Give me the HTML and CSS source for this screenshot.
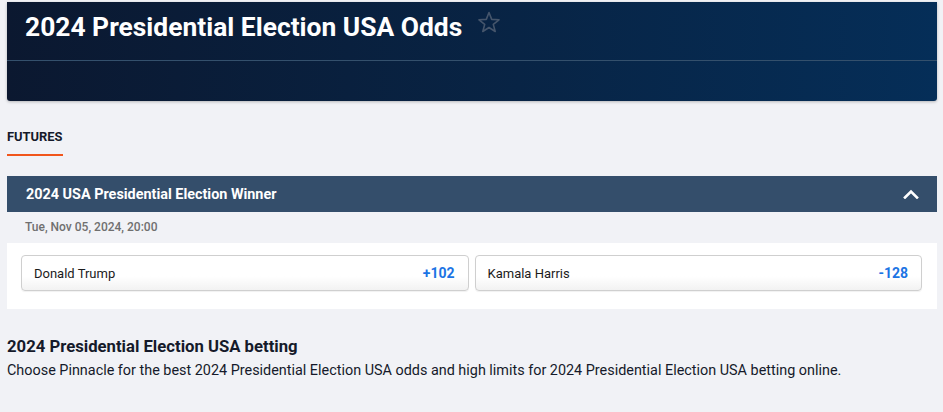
FILE: index.html
```html
<!DOCTYPE html>
<html lang="en">
<head>
<meta charset="utf-8">
<link rel="stylesheet" href="styles.css">
</head>
<body>
<div class="page">
  <header class="hero">
    <div class="hero-top">
      <h1 class="hero-title">2024 Presidential Election USA Odds</h1>
      <svg class="star" width="24" height="24" viewBox="0 0 24 24"><path d="M12 2.5l2.7 6.9 7.3.4-5.7 4.6 1.9 7.1L12 17.5l-6.2 4 1.9-7.1L2 9.8l7.3-.4z" fill="none" stroke="#45556b" stroke-width="1.6" stroke-linejoin="round"/></svg>
    </div>
    <div class="hero-bottom"></div>
  </header>

  <nav class="tabs">
    <span class="tab active">FUTURES</span>
  </nav>

  <section class="market">
    <div class="market-head">
      <span class="market-title">2024 USA Presidential Election Winner</span>
      <svg class="chevron" width="16" height="10" viewBox="0 0 16 10"><path d="M2 8.5L8 2.5l6 6" fill="none" stroke="#fff" stroke-width="2.6" stroke-linecap="square"/></svg>
    </div>
    <div class="market-date">Tue, Nov 05, 2024, 20:00</div>
    <div class="market-body">
      <button class="odd"><span class="odd-name">Donald Trump</span><span class="odd-price">+102</span></button>
      <button class="odd"><span class="odd-name">Kamala Harris</span><span class="odd-price">-128</span></button>
    </div>
  </section>

  <section class="about">
    <h2 class="about-title">2024 Presidential Election USA betting</h2>
    <p class="about-text">Choose Pinnacle for the best 2024 Presidential Election USA odds and high limits for 2024 Presidential Election USA betting online.</p>
  </section>
</div>
</body>
</html>
```

FILE: styles.css
```css
* { box-sizing: border-box; }
html, body { margin: 0; padding: 0; }
body {
  background: #f1f2f6;
  font-family: Roboto, "Liberation Sans", Arial, sans-serif;
  color: #151a2a;
}
.page {
  padding: 2px 6px 0 7px;
}
.hero {
  background: linear-gradient(90deg, #0b1830 0%, #082445 55%, #052e58 100%);
  border-radius: 0 0 3px 3px;
  box-shadow: 0 1px 3px rgba(0,0,0,0.25);
}
.hero-top {
  height: 59px;
  display: flex;
  align-items: flex-start;
  padding: 9px 0 0 18px;
  border-bottom: 1px solid #34506c;
}
.hero-title {
  margin: 0;
  font-size: 26.4px;
  line-height: 32px;
  font-weight: 700;
  color: #fff;
}
.star {
  margin: -1px 0 0 15px;
}
.hero-bottom { height: 40px; }

.tabs {
  padding-top: 28px;
  display: flex;
}
.tab {
  font-size: 12.9px;
  font-weight: 700;
  color: #151a2a;
  padding-bottom: 10px;
  border-bottom: 2px solid #f1561c;
  line-height: 15px;
}
.market { margin-top: 20px; }
.market-head {
  height: 36px;
  background: #344e6b;
  display: flex;
  align-items: center;
  justify-content: space-between;
  padding: 0 18px 0 19px;
}
.market-title {
  color: #fff;
  font-size: 14.4px;
  font-weight: 700;
}
.market-date {
  height: 31px;
  padding: 8px 0 0 18px;
  font-size: 12px;
  font-weight: 500;
  color: #6f6f6f;
}
.market-body {
  background: #fff;
  display: flex;
  gap: 6px;
  padding: 12px 15px 18px 14px;
}
.odd {
  flex: 1;
  height: 36px;
  display: flex;
  align-items: center;
  justify-content: space-between;
  padding: 0 13px 0 12px;
  border: 1px solid #cfcfcf;
  border-radius: 4px;
  background: linear-gradient(180deg, #ffffff 60%, #f2f2f2 100%);
  box-shadow: 0 1px 1px rgba(0,0,0,0.06);
  font-family: inherit;
  cursor: pointer;
}
.odd-name {
  font-size: 13px;
  color: #1b1b1b;
}
.odd-price {
  font-size: 14px;
  font-weight: 700;
  color: #1b74e4;
}
.about { padding-top: 27px; }
.about-title {
  margin: 0;
  font-size: 16.7px;
  line-height: 22px;
  font-weight: 700;
  color: #151a2a;
}
.about-text {
  margin: 3px 0 0;
  font-size: 14.4px;
  line-height: 20px;
  color: #151a2a;
}
```
